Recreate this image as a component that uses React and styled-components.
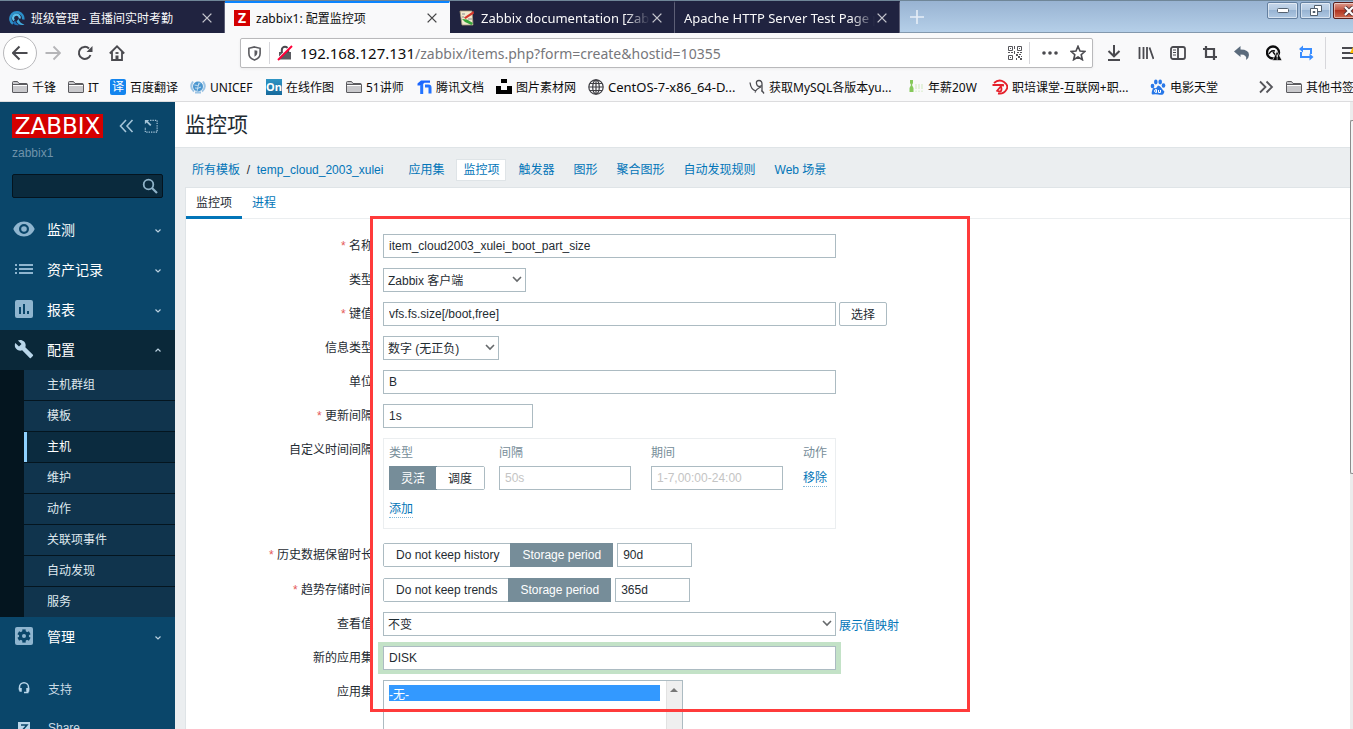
import React from 'react';
import styled, { createGlobalStyle, css } from 'styled-components';

const GlobalStyle = createGlobalStyle`
    * {
        box-sizing: border-box;
    }
    body {
        margin: 0;
        font-family: "Liberation Sans", "Noto Sans CJK SC", sans-serif;
        font-size: 12px;
        color: #1f2c33;
        background: #ebeef0;
    }
    button, input, select {
        font: inherit;
        color: inherit;
        margin: 0;
    }
    a {
        color: #0275b8;
        text-decoration: none;
    }
    svg {
        display: block;
        flex: none;
    }
`

const Window = styled.div`
    height: 100vh;
    display: flex;
    flex-direction: column;
    overflow: hidden;
`

/* ---------- browser ---------- */

const Browser = styled.header`
    flex: none;
    font-family: "Noto Sans", "Noto Sans CJK SC", sans-serif;
    color: #0c0c0d;
    background: #f9f9fa;
    border-bottom: 1px solid #dcdcde;
`

const TabStrip = styled.div`
    display: flex;
    height: 33px;
    border-top: 1px solid #6f8698;
    background: linear-gradient(#98b3d2, #b6d0e9);
    box-shadow: inset 0 -1px 0 #8398ad;
`

const Tab = styled.div`
    flex: 0 1 225px;
    min-width: 0;
    display: flex;
    align-items: center;
    padding: 0 10px 0 9px;
    gap: 6px;
    font-size: ${p => p.$fade ? 13 : 12}px;
    color: ${p => p.$active ? '#0c0c0d' : '#f9f9fa'};
    background: ${p => p.$active ? '#f9f9fa' : '#202340'};
    border-top: 2px solid ${p => p.$active ? '#0a84ff' : '#202340'};
    border-right: 1px solid ${p => p.$active ? '#f9f9fa' : '#5d5f76'};
    span {
        flex: 1;
        overflow: hidden;
        white-space: nowrap;
        ${p => p.$fade && css`
            margin-right: -6px;
            mask-image: linear-gradient(to left, transparent, #000 24px);
        `}
    }
`

const PlainButton = styled.button`
    flex: none;
    display: flex;
    align-items: center;
    justify-content: center;
    padding: 0;
    border: 0;
    background: none;
`

const CloseTab = styled(PlainButton)`
    opacity: .75;
`

const NewTab = styled(PlainButton)`
    width: 33px;
    color: #e6eef7;
`

const WindowButtons = styled.div`
    display: flex;
    gap: 2px;
    margin: 1px -11px 0 auto;
`

const WindowButton = styled(PlainButton)`
    width: 31px;
    height: 17px;
    border: 1px solid ${p => p.$close ? '#5a1f1c' : '#6480a0'};
    border-radius: 2px;
    box-shadow: inset 0 0 0 1px rgba(255, 255, 255, .5);
    background: ${p => p.$close
        ? 'linear-gradient(#dd9a8c, #c1503c 50%, #b03420 50%, #cf6a50)'
        : 'linear-gradient(#c5d6ea, #b2c8e0 50%, #98b4d3 50%, #b0c9e3)'};
`

const Toolbar = styled.div`
    display: flex;
    align-items: center;
    height: 40px;
    padding-left: 3px;
    color: #4a4a4f;
    overflow: hidden;
`

const NavButtons = styled.div`
    display: flex;
    align-items: center;
    flex: 0 0 237px;
`

const NavButton = styled(PlainButton)`
    width: 32px;
    height: 34px;
    color: ${p => p.$off ? '#b5b5b8' : '#4a4a4f'};
`

const BackButton = styled(NavButton)`
    width: 34px;
    border: 1px solid #b8b8bb;
    border-radius: 50%;
    background: #fff;
`

const UrlBar = styled.div`
    flex: 1;
    min-width: 0;
    display: flex;
    align-items: center;
    height: 30px;
    padding: 0 6px;
    border: 1px solid #b9b9bb;
    border-radius: 2px;
    background: #fff;
    box-shadow: 0 1px 3px rgba(0, 0, 0, .06);
`

const UrlText = styled.div`
    flex: 1;
    margin-left: 7px;
    font-size: 14px;
    color: #77777b;
    white-space: nowrap;
    b {
        font-size: 15px;
        font-weight: 400;
        color: #0c0c0d;
    }
`

const Star = styled.span`
    margin-left: 12px;
`

const Separator = styled.i`
    flex: none;
    width: 1px;
    height: ${p => p.$h || 22}px;
    margin: ${p => p.$m || '0 7px'};
    background: #d7d7db;
`

const Actions = styled.div`
    flex: 0 0 260px;
    display: flex;
    align-items: center;
    padding-left: 5px;
    overflow: hidden;
`

const Bookmarks = styled.nav`
    display: flex;
    align-items: center;
    height: 28px;
    padding-left: 12px;
    white-space: nowrap;
    overflow: hidden;
`

const Bookmark = styled.a`
    flex: 0 0 ${p => p.$w}px;
    display: flex;
    align-items: center;
    gap: 4px;
    font-size: ${p => p.$fs || 12}px;
    color: #0c0c0d;
`

const Square = styled.i`
    width: 16px;
    height: 16px;
    display: grid;
    place-items: center;
    border-radius: ${p => p.$r || 0}px;
    background: ${p => p.$bg};
    color: #fff;
    font-style: normal;
    font-weight: ${p => p.$bold ? 700 : 400};
    font-size: ${p => p.$fs || 11}px;
    line-height: 16px;
`

/* ---------- sidebar ---------- */

const Body = styled.div`
    flex: 1;
    min-height: 0;
    display: flex;
`

const Sidebar = styled.aside`
    flex: 0 0 175px;
    overflow: hidden;
    background: #0a466a;
    color: #fff;
`

const SidebarTop = styled.div`
    padding: 12px 12px 0;
    height: 108px;
`

const LogoRow = styled.div`
    display: flex;
    align-items: center;
    color: #a5c4d8;
`

const Logo = styled.a`
    width: 91px;
    height: 24px;
    margin-right: 16px;
    background: #d40000;
    color: #fff;
    text-align: center;
    font-family: "DejaVu Sans", sans-serif;
    font-size: 23px;
    line-height: 24px;
`

const Compact = styled.span`
    margin-left: 9px;
`

const ServerName = styled.div`
    margin-top: 6px;
    line-height: 18px;
    color: #6f93aa;
`

const Search = styled.label`
    display: flex;
    align-items: center;
    height: 24px;
    margin-top: 12px;
    padding-right: 4px;
    border: 1px solid #04141f;
    border-radius: 2px;
    background: #0a2a3d;
    color: #8fb3c9;
    input {
        flex: 1;
        min-width: 0;
        border: 0;
        outline: 0;
        background: none;
    }
`

const MenuItem = styled.a`
    display: flex;
    align-items: center;
    height: 40px;
    padding: 0 13px 2px 12px;
    font-size: ${p => p.$small ? 12 : 14}px;
    color: ${p => p.$small ? '#cbdbe5' : '#fff'};
    background: ${p => p.$open ? '#0a2839' : 'none'};
    span {
        flex: 1;
        margin-left: ${p => p.$small ? 12 : 11}px;
    }
`

const MenuIcon = styled.i`
    width: 24px;
    display: flex;
    justify-content: center;
    color: ${p => p.$open ? '#b9d6ea' : '#8fb5cf'};
`

const SubMenu = styled.div`
    border-left: 24px solid #04151f;
    display: flex;
    flex-direction: column;
    gap: 1px;
    background: #04151f;
`

const SubItem = styled.a`
    height: 30px;
    line-height: 31px;
    padding-left: ${p => p.$active ? 20 : 23}px;
    color: #dfe8ee;
    background: ${p => p.$active ? '#0b2b3f' : '#10344d'};
    ${p => p.$active && css`border-left: 3px solid #8fd2ff; color: #fff;`}
`

const Footer = styled.div`
    padding-top: 12px;
`

/* ---------- page ---------- */

const Main = styled.main`
    flex: 1;
    min-width: 0;
    display: flex;
    flex-direction: column;
`

const PageTitle = styled.h1`
    flex: none;
    height: 46px;
    margin: 0;
    padding-left: 10px;
    font-size: 21px;
    font-weight: 400;
    line-height: 45px;
    background: #fff;
    border-bottom: 1px solid #dfe4e7;
`

const Crumbs = styled.nav`
    flex: none;
    display: flex;
    align-items: center;
    height: 39px;
    padding: 5px 0 0 17px;
    white-space: pre;
`

const Path = styled.div`
    margin-right: 12px;
    line-height: 20px;
`

const Crumb = styled.a`
    margin-left: 7px;
    padding: 0 6px;
    line-height: 20px;
    ${p => p.$active && css`background: #fff; outline: 1px solid #dfe4e7;`}
`

const Card = styled.section`
    flex: 1;
    min-height: 0;
    margin-left: 10px;
    background: #fff;
    border: 1px solid #dfe4e7;
    border-right: 0;
    border-bottom: 0;
    position: relative;
`

const Tabs = styled.div`
    display: flex;
    height: 31px;
    border-bottom: 1px solid #ebeef0;
    a {
        padding: 0 10px;
        line-height: 31px;
        height: 31px;
    }
    a:first-child {
        color: #1f2c33;
        border-bottom: 3px solid #0275b8;
    }
`

const Form = styled.form`
    display: flex;
    flex-direction: column;
    gap: 10px;
    padding-top: 15px;
`

const Row = styled.div`
    display: grid;
    grid-template-columns: 187px 1fr;
    column-gap: 10px;
    margin-bottom: ${p => p.$after || 0}px;
`

const Label = styled.label`
    text-align: right;
    line-height: 25px;
    height: 24px;
    ${p => p.$required && css`
        &::before {
            content: "* ";
            color: #e45959;
        }
    `}
`

const Field = styled.div`
    display: flex;
    align-items: center;
    gap: ${p => p.$gap || 3}px;
`

const Input = styled.input`
    width: ${p => p.$w || 453}px;
    height: 24px;
    padding: 0 5px;
    border: 1px solid #acbbc2;
    border-radius: 0;
    background: #fff;
    outline: 0;
    &::placeholder {
        color: #c4c4c4;
    }
    ${p => p.$focus && css`box-shadow: -1px 0 0 4px #c3e2c7, 1px 0 0 4px #c3e2c7;`}
`

const SelectWrap = styled.div`
    position: relative;
    width: ${p => p.$w}px;
    select {
        display: block;
        width: 100%;
        height: 24px;
        padding: 2px 4px 0;
        appearance: none;
        border: 1px solid #acbbc2;
        border-radius: 0;
        background: #fff;
    }
    svg {
        position: absolute;
        right: 4px;
        top: 8px;
        color: #66696b;
        pointer-events: none;
    }
`

const GreyButton = styled.button`
    height: 24px;
    padding: 0 11px 2px;
    border: 1px solid #acbbc2;
    border-radius: 2px;
    background: #fff;
`

const Segments = styled.div`
    display: flex;
    width: max-content;
    border: 1px solid #acbbc2;
    border-radius: 2px;
    button {
        height: 22px;
        padding: 0 12px 1px;
        border: 0;
        background: #fff;
    }
    button[aria-pressed="true"] {
        margin: -1px;
        height: 24px;
        color: #fff;
        background: #768d99;
    }
`

const Intervals = styled.div`
    width: 453px;
    padding-left: 5px;
    border: 1px solid #ebeef0;
    table {
        width: 100%;
        border-collapse: collapse;
        table-layout: fixed;
    }
    th, td {
        padding: 0;
        height: 24px;
        font-weight: 400;
        text-align: left;
    }
    th {
        height: 27px;
        padding-bottom: 2px;
        color: #768d99;
    }
    tfoot td {
        height: 38px;
    }
`

const DottedLink = styled.a`
    display: inline-block;
    line-height: 16px;
    border-bottom: 1px dotted #7fb8da;
`

const ListBox = styled.div`
    display: flex;
    width: 300px;
    height: 120px;
    border: 1px solid #acbbc2;
    background: #fff;
    select {
        flex: 1;
        padding: 4px 6px 4px 5px;
        border: 0;
        border-radius: 0;
        outline: 0;
        background: #fff;
        scrollbar-width: none;
    }
    option {
        padding: 0;
        height: 16px;
        min-height: 16px;
        line-height: 16px;
    }
    option:checked {
        background: #3399ff linear-gradient(#3399ff, #3399ff);
        color: #fff;
        -webkit-text-fill-color: #fff;
    }
`

const ListScroll = styled.div`
    flex: 0 0 16px;
    display: flex;
    justify-content: center;
    padding-top: 7px;
    background: #efefef;
    box-shadow: inset 1px 0 0 #e2e2e2;
`

const Marker = styled.div`
    position: absolute;
    left: 184px;
    top: 28px;
    width: 600px;
    height: 496px;
    border: 3px solid #ff3b3b;
    pointer-events: none;
`

const Scrollbar = styled.div`
    flex: 0 0 3px;
    padding-top: 18px;
    background: #ececec;
    i {
        display: block;
        height: 354px;
        border: 1px solid #8c8c8c;
        border-right: 0;
        border-radius: 2px 0 0 2px;
        background: #f4f4f4;
    }
`

/* ---------- icons ---------- */

function Icon({ size = 16, w = 1.5, children, ...rest }) {
    return (
        <svg width={size} height={size} viewBox="0 0 16 16" fill="none" stroke="currentColor" strokeWidth={w} {...rest}>
            {children}
        </svg>
    );
}

const Cross = () => <Icon size={14} w={1.6}><path d="M3 3l10 10M13 3L3 13" /></Icon>
const Chevron = ({ up }) => <Icon size={8} w={2.4} color="#b9d0df"><path d={up ? 'M3 13l5-5 5 5' : 'M3 9l5 5 5-5'} /></Icon>
const SelectArrow = () => <svg width="10" height="7" viewBox="0 0 10 7" fill="none" stroke="currentColor" strokeWidth="1.6"><path d="M1 1l4 4 4-4" /></svg>

const Folder = () => (
    <svg width="16" height="16" viewBox="0 0 16 16" fill="#c9c9cc" stroke="#5b5b5f">
        <path d="M.5 13V3.500q0-1 1-1h4l1.500 2h7q1.500 0 1.500 1V13q0 .5-.5.5H1q-.5 0-.5-.5z" />
        <path d="M1 6.500h14" stroke="#fff" /><path d="M1 5.500h14" />
    </svg>
)

const Swirl = () => (
    <svg width="16" height="16" viewBox="0 0 16 16" fill="none">
        <path d="M4 13.800A6.400 6.400 0 1 1 14.200 9.500" stroke="#2b8fc9" strokeWidth="2.600" />
        <path d="M5 10.500A3.400 3.400 0 1 1 10.800 8.500" stroke="#5cc0ea" strokeWidth="2.200" />
        <path d="M9.500 9q1.500 4.500 6 5.500-5 2-8-3z" fill="#3fa9dc" />
        <path d="M6 10.500q1 3.500 4 4.500-4 1-6-2z" fill="#1e6fb5" />
    </svg>
)

const Notes = () => (
    <svg width="16" height="16" viewBox="0 0 16 16">
        <path d="M1 1h12l1 14H3z" fill="#f2e9cf" stroke="#a79a7b" strokeWidth=".8" />
        <path d="M3 4h3M3 7h2M9 9h4" stroke="#8b8b8b" />
        <path d="M5 7.500L14.500 1 15 3.500 6.500 9z" fill="#d5382c" />
        <path d="M3 9l5 .5 6 3.500-1.500 2L6 12z" fill="#36a53a" />
    </svg>
)

const Globe = () => (
    <Icon w={1.200} color="#3f3f44"><circle cx="8" cy="8" r="7.200" /><ellipse cx="8" cy="8" rx="3.300" ry="7.200" /><path d="M1 8h14M8 1v14M2 4.500h12M2 11.500h12" /></Icon>
)

const Unicef = () => (
    <svg width="16" height="16" viewBox="0 0 16 16" fill="none">
        <path d="M3 2.500Q-1 8 4 12.500M13 2.500q4 5.500-1 10M5 13.500h6" stroke="#9cc4e4" strokeWidth="2" />
        <circle cx="8" cy="7.500" r="5" fill="#4a96cf" />
        <path d="M4.500 6q3 2 6-2M5 9q3 1 6-1M9 3.500L7 12" stroke="#cfe4f4" strokeWidth=".9" />
    </svg>
)

const Docs = () => (
    <svg width="16" height="16" viewBox="0 0 16 16">
        <path d="M1.500 4.500L5 1.500h9v2.200H8.500L5 6.500H1.500z" fill="#1a66ff" />
        <path d="M4.200 6.500l3-2.500v11h-3zM9 5.500h3.500q3 0 3 3v6h-3V8.500H9z" fill="#2273ff" />
    </svg>
)

const Blocks = () => <svg width="16" height="16" viewBox="0 0 16 16" fill="#000"><path d="M5 0h6v4H5zM0 7h5v4h6V7h5v8H0z" /></svg>

const Dolphin = () => <Icon w={1.300} color="#4a4a4f"><path d="M1 3.500Q2 11 7 12M13 13V5q0-3.500-3-3.500T7.500 4.500 10 7.500l3-1M12.500 11l2.500 3.500M12 8q-5 2-6 5.500" /></Icon>

const Bottle = () => (
    <svg width="16" height="16" viewBox="0 0 16 16">
        <path d="M2 1h3v3l-1 2 1.500 3v4h-4V9L3 6 2 4z" fill="#86c95b" />
        <path d="M8 5v5M11 5v5M14 5v5M8 11.500v1.500M11 11.500v1.500M14 11.500v1.500" stroke="#cfe9bd" />
    </svg>
)

const RedMark = () => (
    <Icon w={1.800} color="#e5202b"><path d="M2 4q5-4.500 10-1t2.500 7.500q-3 5-8.500 4M.5 6H10l-5.500 6.500M12 6.500q-4-.5-3 1.500t0 4q-1 1-3 0" /></Icon>
)

const Paw = () => (
    <svg width="16" height="16" viewBox="0 0 16 16" fill="#2878e8">
        <ellipse cx="2.500" cy="7" rx="1.800" ry="2.300" /><ellipse cx="5.800" cy="3" rx="1.800" ry="2.400" />
        <ellipse cx="10.200" cy="3" rx="1.800" ry="2.400" /><ellipse cx="13.500" cy="6.500" rx="1.800" ry="2.300" />
        <path d="M8 6.500q2 0 3.500 2.500t2.500 3-1 3.500q-2 .5-5 0t-5 0-1-3.500 2.500-3T8 6.500z" />
        <path d="M6.500 10.500q-2 0-2 1.500t2 1.500zM8.500 11v2.500h2V11" fill="none" stroke="#fff" />
    </svg>
)

const qrCells = 'M9 9h2v2H9zM12 9h2v1h-2zM11 11h2v2h-2zM9 13h1v2H9zM13 13h2v2h-2zM14 11h1v1h-1zM7 1h1v3H7zM7 6h1v3H7zM1 7h2v1H1zM4 7h2v1H4zM10 7h2v1h-2zM13 7h2v1h-2zM3 3h1v1H3zM12 3h1v1h-1zM3 12h1v1H3z'

const menu = [
    ['监测', <svg width="22" height="16" viewBox="0 0 22 16"><path fill="currentColor" fillRule="evenodd" d="M11 .5C6 .5 2 3.500.3 8 2 12.500 6 15.500 11 15.500s9-3 10.700-7.500C20 3.500 16 .5 11 .5zM11 13a5 5 0 1 1 0-10 5 5 0 0 1 0 10zm0-2.200a2.800 2.800 0 1 0 0-5.600 2.800 2.800 0 0 0 0 5.600z" /></svg>],
    ['资产记录', <svg width="18" height="12" viewBox="0 0 18 12" stroke="currentColor" strokeWidth="2"><path d="M0 2h2M4 2h14M0 6h2M4 6h14M0 10h2M4 10h14" /></svg>],
    ['报表', <svg width="18" height="18" viewBox="0 0 18 18"><path fill="currentColor" fillRule="evenodd" d="M2 0h14q2 0 2 2v14q0 2-2 2H2q-2 0-2-2V2q0-2 2-2zM4 7v7h2V7zM8 4v10h2V4zM12 11v3h2v-3z" /></svg>],
]

const wrench = <svg width="20" height="20" viewBox="0 0 24 24"><path fill="currentColor" d="M22.700 19l-9.100-9.100c.9-2.300.4-5-1.500-6.900-2-2-5-2.400-7.400-1.300L9 6 6 9 1.600 4.700C.4 7.100.9 10.100 2.900 12.100c1.900 1.900 4.600 2.400 6.900 1.500l9.100 9.100c.4.400 1 .4 1.400 0l2.300-2.300c.5-.4.5-1.100.1-1.400z" /></svg>

const gear = (
    <svg width="18" height="18" viewBox="0 0 18 18">
        <rect width="18" height="18" rx="2" fill="currentColor" />
        <g fill="#0a466a">
            <circle cx="9" cy="9" r="5" />
            {[0, 60, 120].map(a => <rect key={a} x="7.300" y="2.400" width="3.400" height="13.200" transform={`rotate(${a} 9 9)`} />)}
        </g>
        <circle cx="9" cy="9" r="2" fill="currentColor" />
    </svg>
)

const subItems = ['主机群组', '模板', '主机', '维护', '动作', '关联项事件', '自动发现', '服务']
const crumbs = ['应用集', '监控项', '触发器', '图形', '聚合图形', '自动发现规则', 'Web 场景']

const bookmarks = [
    ['千锋', 56, <Folder />],
    ['IT', 42, <Folder />],
    ['百度翻译', 80, <Square $bg="#1485ee" $r={2} $fs={12}>译</Square>],
    ['UNICEF', 76, <Unicef />],
    ['在线作图', 80, <Square $bg="linear-gradient(#2f95c4, #176a9c)" $bold>On</Square>],
    ['51讲师', 70, <Folder />],
    ['腾讯文档', 80, <Docs />],
    ['图片素材网', 92, <Blocks />],
    ['CentOS-7-x86_64-D...', 161, <Globe />, 13],
    ['获取MySQL各版本yu...', 159, <Dolphin />],
    ['年薪20W', 84, <Bottle />],
    ['职培课堂-互联网+职...', 158, <RedMark />],
    ['电影天堂', 108, <Paw />],
]

function BrowserChrome() {
    return (
        <Browser>
            <TabStrip>
                <Tab><Swirl /><span>班级管理 - 直播间实时考勤</span><CloseTab aria-label="关闭"><Cross /></CloseTab></Tab>
                <Tab $active><Square $bg="#d40000" $bold $fs={14}>Z</Square><span>zabbix1: 配置监控项</span><CloseTab aria-label="关闭"><Cross /></CloseTab></Tab>
                <Tab $fade><Notes /><span>Zabbix documentation [Zabbix]</span><CloseTab aria-label="关闭"><Cross /></CloseTab></Tab>
                <Tab $fade><span>Apache HTTP Server Test Page powered</span><CloseTab aria-label="关闭"><Cross /></CloseTab></Tab>
                <NewTab aria-label="新标签页"><Icon w={1.600}><path d="M8 1v14M1 8h14" /></Icon></NewTab>
                <WindowButtons>
                    <WindowButton aria-label="最小化"><svg width="12" height="5"><rect x=".5" y=".5" width="11" height="4" rx="1" fill="#fff" stroke="#53606e" /></svg></WindowButton>
                    <WindowButton aria-label="还原"><svg width="12" height="11" fill="#fff" stroke="#53606e"><path d="M4.500.5h7v6h-7z" /><path d="M.5 3.500h7v7h-7z" /><path d="M3 6.500h2v1H3z" /></svg></WindowButton>
                    <WindowButton $close aria-label="关闭窗口"><svg width="12" height="10" viewBox="0 0 12 10"><path d="M2 1l8 8M10 1L2 9" stroke="#53343a" strokeWidth="4" /><path d="M2 1l8 8M10 1L2 9" stroke="#fff" strokeWidth="2.200" /></svg></WindowButton>
                </WindowButtons>
            </TabStrip>
            <Toolbar>
                <NavButtons>
                    <BackButton aria-label="后退"><Icon w={2}><path d="M15.500 8H1.500M7.500 1.500L1 8l6.500 6.500" /></Icon></BackButton>
                    <NavButton $off aria-label="前进"><Icon w={1.800}><path d="M.5 8h14M8.500 1.500L15 8l-6.500 6.500" /></Icon></NavButton>
                    <NavButton aria-label="刷新"><Icon w={2}><path d="M13.500 10A6 6 0 1 1 12 3.500" /><path d="M15.500 1v6h-6z" fill="currentColor" stroke="none" /></Icon></NavButton>
                    <NavButton aria-label="主页"><Icon w={1.800}><path d="M.8 8.500L8 1.300l7.200 7.200M3 7v8h10V7" /><path d="M8 15v-4.500" strokeWidth="3" /><path d="M6.500 8h3" /></Icon></NavButton>
                </NavButtons>
                <UrlBar>
                    <Icon size={15} w={1.700} color="#5b5b60"><path d="M8 1l6 1.500V8q0 5-6 7-6-2-6-7V2.500z" /><path d="M8 4.500v7q3-1.500 3-4V5z" fill="currentColor" stroke="none" /></Icon>
                    <Separator />
                    <Icon><path d="M2 7h12v7.500H2z" fill="#5b5b60" stroke="none" /><path d="M4.800 8V5a3.200 3.200 0 0 1 6.400 0v3" strokeWidth="2" /><path d="M1 13.500L13.500 1" stroke="#fff" strokeWidth="1.500" /><path d="M1 15L15 1" stroke="#ff0039" strokeWidth="2" /></Icon>
                    <UrlText><b>192.168.127.131</b>/zabbix/items.php?form=create&amp;hostid=10355</UrlText>
                    <Icon color="#55555a">
                        <path d="M1.500 1.500h4v4h-4zM10.500 1.500h4v4h-4zM1.500 10.500h4v4h-4z" strokeWidth="1" />
                        <path d={qrCells} fill="currentColor" stroke="none" />
                    </Icon>
                    <Separator $m="0 12px 0 6px" />
                    <Icon><path d="M2 8h0M8 8h0M14 8h0" strokeWidth="3.600" strokeLinecap="round" /></Icon>
                    <Star><Icon w={1.600}><path d="M8 1.300l2 4.700 5 .4-3.800 3.300 1.200 5L8 12l-4.400 2.700 1.200-5L1 6.400 6 6z" /></Icon></Star>
                </UrlBar>
                <Actions>
                    <NavButton aria-label="下载"><Icon w={2}><path d="M8 0v11M2.500 6L8 11.300 13.500 6M2 15h12" /></Icon></NavButton>
                    <NavButton aria-label="书库"><Icon w={1.800}><path d="M1.500 2v12M5.500 2v12M9 2v12M11.500 2.500L15.500 14" /></Icon></NavButton>
                    <NavButton aria-label="侧栏"><Icon w={1.800}><rect x="1" y="2" width="14" height="12" rx="2" /><path d="M8 2v12" /><path d="M3 5h3M3 7.500h3M3 10h3" strokeWidth="1" /></Icon></NavButton>
                    <NavButton aria-label="截图"><Icon w={2.200}><path d="M4 1v11h11M1 4h11v11" /></Icon></NavButton>
                    <NavButton aria-label="撤销"><Icon color="#5b6b7c"><path d="M0 6.500L6.500 1v3.500Q15 4.500 15 10q0 3-3 5 1.500-5.500-5.500-5.500V12z" fill="currentColor" stroke="none" /></Icon></NavButton>
                    <NavButton aria-label="扩展"><Icon color="#0c0c0d"><circle cx="7" cy="7.500" r="6" strokeWidth="2.400" /><path d="M3 9q2-4 6-3M7 7l4 5" /><path d="M11 6l5 9.500H6.500z" fill="currentColor" stroke="#fff" strokeWidth=".6" /><path d="M11.200 9.500v3M11.200 13.500v1" stroke="#fff" strokeWidth="1.200" /></Icon></NavButton>
                    <NavButton aria-label="同步"><Icon w={2} color="#3a8dff"><path d="M13 9V4H4M3 7v5h9" /><path d="M5 .5v7L1 4zM11.500 8.500v7l4-3.500z" fill="currentColor" stroke="none" /></Icon></NavButton>
                    <Separator $h={32} $m="0 7px 0 3px" />
                    <NavButton aria-label="菜单"><Icon w={2}><path d="M1 3h14M1 8h14M1 13h14" /><path d="M13 0l5 8H9z" fill="#ffbf00" stroke="none" /></Icon></NavButton>
                </Actions>
            </Toolbar>
            <Bookmarks>
                {bookmarks.map(([text, w, icon, fs]) => <Bookmark key={text} href="#" $w={w} $fs={fs}>{icon}{text}</Bookmark>)}
                <Bookmark href="#" $w={28} aria-label="更多"><Icon w={1.800} color="#55555a"><path d="M2 2.500L7.500 8 2 13.500M8.500 2.500L14 8l-5.500 5.500" /></Icon></Bookmark>
                <Bookmark href="#" $w={80}><Folder />其他书签</Bookmark>
            </Bookmarks>
        </Browser>
    );
}

function SideMenu() {
    return (
        <Sidebar>
            <SidebarTop>
                <LogoRow>
                    <Logo href="#">ZABBIX</Logo>
                    <Icon w={1.600}><path d="M7 2L1.500 8 7 14M13.500 2L8 8l5.500 6" /></Icon>
                    <Compact><Icon size={14} w={1.400}><path d="M7 1.500h8V15H1.500V9" strokeDasharray="1.500 1.200" /><path d="M1 1h5L4.500 2.500l4 4-1.500 1.500-4-4L1 6z" fill="currentColor" stroke="none" /></Icon></Compact>
                </LogoRow>
                <ServerName>zabbix1</ServerName>
                <Search>
                    <input aria-label="搜索" />
                    <Icon w={1.800}><circle cx="6.500" cy="6.500" r="4.800" /><path d="M10 10l5 5" strokeWidth="2.200" /></Icon>
                </Search>
            </SidebarTop>
            <nav>
                {menu.map(([text, icon]) => (
                    <MenuItem key={text} href="#"><MenuIcon>{icon}</MenuIcon><span>{text}</span><Chevron /></MenuItem>
                ))}
                <MenuItem href="#" $open><MenuIcon $open>{wrench}</MenuIcon><span>配置</span><Chevron up /></MenuItem>
                <SubMenu>
                    {subItems.map(text => <SubItem key={text} href="#" $active={text === '主机'}>{text}</SubItem>)}
                </SubMenu>
                <MenuItem href="#"><MenuIcon>{gear}</MenuIcon><span>管理</span><Chevron /></MenuItem>
            </nav>
            <Footer>
                <MenuItem href="#" $small>
                    <MenuIcon $open><Icon size={12} w={2}><path d="M2 11V7a6 6 0 0 1 12 0v4M13 10v4H8" /><path d="M1 8h4v5H2zM11 8h4v5h-4z" fill="currentColor" stroke="none" /></Icon></MenuIcon>
                    <span>支持</span>
                </MenuItem>
                <MenuItem href="#" $small>
                    <MenuIcon $open><Icon size={12} w={2}><rect width="16" height="16" fill="currentColor" stroke="none" /><path d="M4 4h8l-7 8h7" stroke="#0a466a" /></Icon></MenuIcon>
                    <span>Share</span>
                </MenuItem>
            </Footer>
        </Sidebar>
    );
}

function Select({ id, w, text }) {
    return (
        <SelectWrap $w={w}>
            <select id={id}><option>{text}</option></select>
            <SelectArrow />
        </SelectWrap>
    );
}

function Toggle({ options, on }) {
    return (
        <Segments>
            {options.map((text, i) => <button key={text} type="button" aria-pressed={i === on}>{text}</button>)}
        </Segments>
    );
}

function ItemForm() {
    return (
        <Form>
            <Row>
                <Label $required htmlFor="name">名称</Label>
                <Field><Input id="name" defaultValue="item_cloud2003_xulei_boot_part_size" /></Field>
            </Row>
            <Row>
                <Label htmlFor="type">类型</Label>
                <Field><Select id="type" w={143} text="Zabbix 客户端" /></Field>
            </Row>
            <Row>
                <Label $required htmlFor="key">键值</Label>
                <Field><Input id="key" defaultValue="vfs.fs.size[/boot,free]" /><GreyButton type="button">选择</GreyButton></Field>
            </Row>
            <Row>
                <Label htmlFor="value_type">信息类型</Label>
                <Field><Select id="value_type" w={116} text="数字 (无正负)" /></Field>
            </Row>
            <Row>
                <Label htmlFor="units">单位</Label>
                <Field><Input id="units" defaultValue="B" /></Field>
            </Row>
            <Row>
                <Label $required htmlFor="delay">更新间隔</Label>
                <Field><Input id="delay" $w={150} defaultValue="1s" /></Field>
            </Row>
            <Row $after={4}>
                <Label as="span">自定义时间间隔</Label>
                <Intervals>
                    <table>
                        <colgroup><col width="110" /><col width="152" /><col width="152" /><col /></colgroup>
                        <thead><tr><th>类型</th><th>间隔</th><th>期间</th><th>动作</th></tr></thead>
                        <tbody>
                            <tr>
                                <td><Toggle options={['灵活', '调度']} on={0} /></td>
                                <td><Input $w={132} placeholder="50s" aria-label="间隔" /></td>
                                <td><Input $w={132} placeholder="1-7,00:00-24:00" aria-label="期间" /></td>
                                <td><DottedLink href="#">移除</DottedLink></td>
                            </tr>
                        </tbody>
                        <tfoot><tr><td colSpan="4"><DottedLink href="#">添加</DottedLink></td></tr></tfoot>
                    </table>
                </Intervals>
            </Row>
            <Row $after={1}>
                <Label $required htmlFor="history">历史数据保留时长</Label>
                <Field $gap={4}><Toggle options={['Do not keep history', 'Storage period']} on={1} /><Input id="history" $w={75} defaultValue="90d" /></Field>
            </Row>
            <Row>
                <Label $required htmlFor="trends">趋势存储时间</Label>
                <Field $gap={4}><Toggle options={['Do not keep trends', 'Storage period']} on={1} /><Input id="trends" $w={75} defaultValue="365d" /></Field>
            </Row>
            <Row>
                <Label htmlFor="valuemap">查看值</Label>
                <Field><Select id="valuemap" w={453} text="不变" /><a href="#">展示值映射</a></Field>
            </Row>
            <Row>
                <Label htmlFor="new_app">新的应用集</Label>
                <Field><Input id="new_app" $focus defaultValue="DISK" /></Field>
            </Row>
            <Row>
                <Label htmlFor="apps">应用集</Label>
                <ListBox>
                    <select id="apps" multiple defaultValue={['0']}><option value="0">-无-</option></select>
                    <ListScroll><svg width="8" height="4" viewBox="0 0 8 4" fill="#777"><path d="M4 0l4 4H0z" /></svg></ListScroll>
                </ListBox>
            </Row>
        </Form>
    );
}

export default function App() {
    return (
        <>
            <GlobalStyle />
            <Window>
                <BrowserChrome />
                <Body>
                    <SideMenu />
                    <Main>
                        <PageTitle>监控项</PageTitle>
                        <Crumbs>
                            <Path><a href="#">所有模板</a>{'  /  '}<a href="#">temp_cloud_2003_xulei</a></Path>
                            {crumbs.map(text => <Crumb key={text} href="#" $active={text === '监控项'}>{text}</Crumb>)}
                        </Crumbs>
                        <Card>
                            <Tabs><a href="#">监控项</a><a href="#">进程</a></Tabs>
                            <ItemForm />
                            <Marker />
                        </Card>
                    </Main>
                    <Scrollbar><i /></Scrollbar>
                </Body>
            </Window>
        </>
    );
}
